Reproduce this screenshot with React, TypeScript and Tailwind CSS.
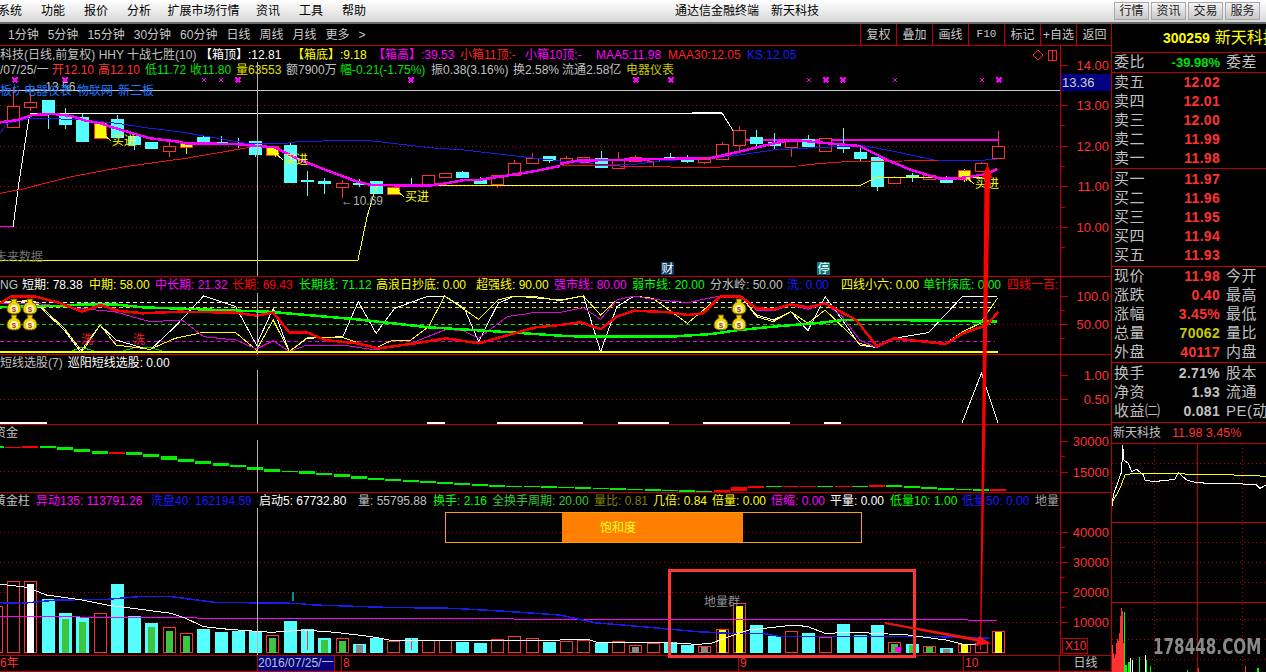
import React from 'react';

type Pt = [number, number];
type Item = { t: string; c: string };

const CANDLE_X = (i: number) => Math.round(13.2 + 17.28 * i);
const pts = (a: Pt[]) => a.map(([x, y]) => `${x},${y}`).join(' ');
// helpers for reading off crops of the picture
const L = (top: number, a: Pt[]): Pt[] => a.map(([x, y]) => [x / 2.8, top + y / 3]);
const R = (top: number, a: Pt[]): Pt[] => a.map(([x, y]) => [560 + x / 2.904, top + y / 3]);

const menu = ['功能', '报价', '分析', '扩展市场行情', '资讯', '工具', '帮助'];
const periods = ['1分钟', '5分钟', '15分钟', '30分钟', '60分钟', '日线', '周线', '月线', '更多'];
const tools = ['复权', '叠加', '画线', 'F10', '标记', '+自选', '返回'];

const info1: Item[] = [
    { t: '科技(日线,前复权) HHY 十战七胜(10)', c: 'w-[200px] text-[#c0c0c0]' },
    { t: '【箱顶】:12.81', c: 'w-[92px] text-white' },
    { t: '【箱底】:9.18', c: 'w-[81px] text-[#ffff00]' },
    { t: '【箱高】:39.53', c: 'w-[87px] text-[#ff00ff]' },
    { t: '小箱11顶:-', c: 'w-[65px] text-[#ff2020]' },
    { t: '小箱10顶:-', c: 'w-[71px] text-[#ff00ff]' },
    { t: 'MAA5:11.98', c: 'w-[72px] text-[#ff00ff]' },
    { t: 'MAA30:12.05', c: 'w-[79px] text-[#ff2020]' },
    { t: 'KS:12.05', c: 'w-[60px] text-[#1a1aff]' },
];
const info2: Item[] = [
    { t: '/07/25/一', c: 'w-[52px] text-[#c0c0c0]' },
    { t: '开12.10', c: 'w-[46px] text-[#ff3232]' },
    { t: '高12.10', c: 'w-[47px] text-[#ff3232]' },
    { t: '低11.72', c: 'w-[45px] text-[#00e000]' },
    { t: '收11.80', c: 'w-[46px] text-[#00e000]' },
    { t: '量63553', c: 'w-[50px] text-[#e0e000]' },
    { t: '额7900万', c: 'w-[54px] text-[#c0c0c0]' },
    { t: '幅-0.21(-1.75%)', c: 'w-[91px] text-[#00e000]' },
    { t: '振0.38(3.16%)', c: 'w-[82px] text-[#c0c0c0]' },
    { t: '换2.58%', c: 'w-[49px] text-[#c0c0c0]' },
    { t: '流通2.58亿', c: 'w-[64px] text-[#c0c0c0]' },
    { t: '电器仪表', c: 'w-[60px] text-[#c8c800]' },
];
const row2: Item[] = [
    { t: 'NG', c: 'w-[22px] text-[#c0c0c0]' },
    { t: '短期: 78.38', c: 'w-[67px] text-white' },
    { t: '中期: 58.00', c: 'w-[66px] text-[#ffff00]' },
    { t: '中长期: 21.32', c: 'w-[77px] text-[#ff00ff]' },
    { t: '长期: 69.43', c: 'w-[67px] text-[#ff0000]' },
    { t: '长期线: 71.12', c: 'w-[77px] text-[#00ff00]' },
    { t: '高浪日抄底: 0.00', c: 'w-[100px] text-[#ffff00]' },
    { t: '超强线: 90.00', c: 'w-[78px] text-[#ffff00]' },
    { t: '强市线: 80.00', c: 'w-[78px] text-[#ff00ff]' },
    { t: '弱市线: 20.00', c: 'w-[78px] text-[#00ff00]' },
    { t: '分水岭: 50.00', c: 'w-[77px] text-[#c0c0c0]' },
    { t: '洗: 0.00', c: 'w-[54px] text-[#1a1aff]' },
    { t: '四线小六: 0.00', c: 'w-[82px] text-[#ffff00]' },
    { t: '单针探底: 0.00', c: 'w-[84px] text-[#00ff00]' },
    { t: '四线一百:', c: 'w-[53px] text-[#ff0000]' },
];
const row5: Item[] = [
    { t: '黄金柱', c: '-ml-[6px] w-[42px] text-[#c0c0c0]' },
    { t: '异动135: 113791.26', c: 'w-[115px] text-[#ff00ff]' },
    { t: '洗盘40: 162194.59', c: 'w-[108px] text-[#1a1aff]' },
    { t: '启动5: 67732.80', c: 'w-[99px] text-white' },
    { t: '量: 55795.88', c: 'w-[75px] text-[#c0c0c0]' },
    { t: '换手: 2.16', c: 'w-[59px] text-[#00ff00]' },
    { t: '全换手周期: 20.00', c: 'w-[102px] text-[#33cc33]' },
    { t: '量比: 0.81', c: 'w-[59px] text-[#808000]' },
    { t: '几倍: 0.84', c: 'w-[59px] text-[#ffff00]' },
    { t: '倍量: 0.00', c: 'w-[59px] text-[#ffff00]' },
    { t: '倍缩: 0.00', c: 'w-[59px] text-[#ff00ff]' },
    { t: '平量: 0.00', c: 'w-[60px] text-white' },
    { t: '低量10: 1.00', c: 'w-[72px] text-[#00ff00]' },
    { t: '低量50: 0.00', c: 'w-[73px] text-[#1a1aff]' },
    { t: '地量', c: 'w-[25px] text-[#a0a0a0]' },
];

// kind, body top, body bottom, wick high, wick low
const candles: [string, number, number, number, number][] = [
    ['r', 106, 127, 88, 127], ['r', 102, 107, 87, 111], ['c', 100, 113, 100, 129], ['c', 115, 124, 108, 129],
    ['c', 117, 141, 114, 141], ['y', 122, 138, 122, 138], ['c', 119, 137, 115, 137], ['c', 136, 144, 136, 150],
    ['c', 142, 148, 142, 149], ['r', 146, 151, 142, 157], ['y', 142, 147, 142, 154], ['c', 137, 142, 135, 142],
    ['c', 142, 143, 136, 143], ['c', 143, 144, 138, 148], ['c', 141, 154, 141, 157], ['y', 146, 155, 146, 155],
    ['c', 145, 182, 142, 182], ['c', 180, 181, 171, 196], ['c', 181, 183, 178, 194], ['r', 183, 187, 180, 198],
    ['c', 183, 184, 179, 187], ['c', 181, 193, 181, 193], ['y', 187, 194, 187, 194], ['c', 184, 185, 178, 185],
    ['r', 175, 184, 175, 184], ['r', 173, 177, 173, 177], ['c', 172, 177, 171, 178], ['c', 179, 183, 177, 183],
    ['r', 175, 184, 175, 188], ['r', 163, 175, 160, 175], ['r', 158, 163, 153, 163], ['c', 156, 160, 156, 163],
    ['r', 158, 162, 156, 162], ['r', 157, 162, 157, 162], ['c', 158, 167, 151, 167], ['r', 159, 168, 152, 168],
    ['r', 157, 161, 155, 161], ['r', 158, 161, 158, 166], ['c', 157, 159, 153, 159], ['c', 159, 161, 155, 163],
    ['r', 159, 162, 159, 164], ['r', 144, 159, 142, 160], ['r', 130, 145, 126, 150], ['c', 137, 143, 130, 147],
    ['c', 142, 145, 133, 149], ['r', 139, 147, 139, 157], ['c', 139, 146, 135, 146], ['r', 138, 151, 138, 151],
    ['c', 144, 148, 128, 153], ['c', 152, 158, 148, 161], ['c', 157, 186, 157, 191], ['r', 177, 183, 176, 184],
    ['c', 175, 177, 173, 182], ['r', 175, 179, 174, 179], ['c', 177, 182, 176, 182], ['y', 170, 179, 169, 182],
    ['r', 163, 171, 162, 171], ['r', 146, 158, 131, 158],
];

// body top, kind, inner top, inner colour (crop units of the volume panel)
const volumes: [number, string, number?, string?][] = [
    [348, 'r'], [274, 'r'], [274, 'r', 282, '#ffffff'], [327, 'c'], [369, 'c', 387, '#3fc43f'], [381, 'c', 396, '#3fc43f'],
    [370, 'r'], [282, 'c'], [378, 'c'], [399, 'c', 411, '#3fc43f'], [412, 'r', 423, '#3fc43f'], [430, 'r', 438, '#3fc43f'],
    [417, 'c'], [426, 'c'], [423, 'c'], [424, 'c'], [436, 'r', 444, '#3fc43f'], [393, 'c'], [417, 'c', 420, '#ff3232|'],
    [444, 'c', 450, '#3fc43f'], [445, 'r', 453, '#3fc43f'], [462, 'c', 465, '#888888'], [444, 'c'], [454, 'r'],
    [444, 'c', 447, '#ff3232|'], [451, 'r'], [451, 'r'], [456, 'c'], [459, 'c'], [448, 'r'], [439, 'r'], [445, 'r'], [456, 'c'],
    [454, 'r'], [451, 'r'], [459, 'c'], [454, 'r'], [466, 'r', 470, '#888888'], [460, 'r'], [456, 'c'], [465, 'c'],
    [469, 'r', 472, '#888888'], [418, 'r', 420, '#ffff00'], [340, 'r', 348, '#ffff00'], [405, 'c'], [438, 'c'], [424, 'r'],
    [429, 'c'], [442, 'r'], [402, 'c'], [435, 'c'], [405, 'c'], [457, 'r', 462, '#3fc43f'], [462, 'c', 466, '#3fc43f'],
    [469, 'r', 472, '#3fc43f'], [474, 'c', 477, '#888888'], [462, 'r', 463, '#ffff00'], [461, 'r'], [424, 'r', 427, '#ffff00'],
];

// capital flow blocks, first entry sits left of candle 0
const flows: [number, number, string][] = [
    [228, 233, 'g'], [230, 233, 'r'], [229, 233, 'r'], [228, 233, 'g'], [231, 240, 'g'], [237, 245, 'g'], [243, 251, 'g'], [246, 251, 'r'],
    [246, 255, 'g'], [252, 261, 'g'], [258, 270, 'g'], [267, 276, 'g'], [273, 281, 'g'], [279, 288, 'g'], [285, 292, 'g'], [291, 300, 'g'],
    [297, 305, 'g'], [303, 305, 'g'], [303, 311, 'g'], [309, 315, 'g'], [312, 321, 'g'], [318, 327, 'g'], [324, 330, 'g'], [327, 333, 'g'],
    [330, 335, 'g'], [333, 339, 'g'], [336, 342, 'g'], [339, 345, 'g'], [342, 347, 'g'], [345, 351, 'g'], [348, 351, 'g'], [348, 351, 'g'],
    [348, 354, 'g'], [351, 354, 'g'], [351, 357, 'g'], [354, 357, 'g'], [354, 360, 'g'], [357, 360, 'g'], [357, 363, 'g'], [360, 363, 'g'],
    [360, 366, 'g'], [363, 366, 'g'], [360, 366, 'r'], [351, 363, 'r'], [348, 354, 'r'], [348, 351, 'g'], [348, 351, 'r'], [348, 351, 'r'],
    [348, 351, 'g'], [348, 351, 'r'], [348, 351, 'g'], [345, 351, 'r'], [345, 351, 'g'], [348, 354, 'g'], [351, 357, 'g'], [354, 360, 'g'],
    [357, 360, 'g'], [357, 363, 'g'], [357, 363, 'r'],
];

const bigMarks = [15, 65, 238, 411, 636, 671, 826, 843, 999];
const smallMarks = [204, 221, 809, 895, 982];
const onlySegments: [number, number][] = [[0, 47], [427, 445], [497, 583], [618, 669], [703, 790], [824, 841]];

const Line: React.FC<{ p: Pt[]; c: string; w?: number; dash?: string }> = ({ p, c, w = 1, dash }) => (
    <polyline points={pts(p)} fill="none" stroke={c} strokeWidth={w} strokeDasharray={dash} />
);

const Dotted: React.FC<{ y: number; x1?: number; x2?: number }> = ({ y, x1 = 0, x2 = 1060 }) => (
    <line x1={x1} x2={x2} y1={y} y2={y} stroke="#c00000" strokeDasharray="1 3" />
);

const Legend: React.FC<{ items: Item[]; className: string }> = ({ items, className }) => (
    <div className={`relative flex overflow-hidden text-[12px] whitespace-nowrap ${className}`}>
        {items.map((it, i) => (
            <span key={i} className={`shrink-0 ${it.c}`}>{it.t}</span>
        ))}
    </div>
);

const Axis: React.FC<{ top: number; h: number; labels: [number, string][]; minor?: number[] }> = ({ top, h, labels, minor = [] }) => (
    <svg viewBox={`1061 ${top} 50 ${h}`} className="h-full w-[50px]" shapeRendering="crispEdges">
        {labels.map(([y, t]) => (
            <g key={t}>
                <line x1={1061} x2={1068} y1={y} y2={y} stroke="#c00000" />
                <text x={1109} y={y + 5} textAnchor="end" fontSize={13} fill="#ff3232">{t}</text>
            </g>
        ))}
        {minor.map(y => <line key={y} x1={1061} x2={1065} y1={y} y2={y} stroke="#c00000" />)}
    </svg>
);

const Bag: React.FC<{ x: number; y: number }> = ({ x, y }) => (
    <g shapeRendering="geometricPrecision">
        <path d={`M${x - 3} ${y - 8} h6 l-1 3 c3 1 5 4 5 7 c0 3 -2 5 -7 5 s-7 -2 -7 -5 c0 -3 2 -6 5 -7 z`} fill="#f2d400" stroke="#6b5600" />
        <circle cx={x} cy={y + 2} r={4} fill="#fff8cc" />
        <text x={x} y={y + 5} textAnchor="middle" fontSize={8} fontWeight={700} fill="#a04a00">$</text>
    </g>
);

const Buy: React.FC<{ x: number; y: number }> = ({ x, y }) => (
    <g>
        <line x1={x - 9} y1={y - 2} x2={x - 1} y2={y + 5} stroke="#ffff00" />
        <line x1={x - 9} y1={y - 2} x2={x - 9} y2={y + 2} stroke="#ffff00" />
        <line x1={x - 9} y1={y - 2} x2={x - 5} y2={y - 2} stroke="#ffff00" />
        <text x={x} y={y + 9} fontSize={12} fill="#ffff00">买进</text>
    </g>
);

const MainChart = () => (
    <svg viewBox="0 46 1060 230" className="absolute inset-0 h-full w-full" shapeRendering="crispEdges">
        {[105, 146, 186, 227].map(y => <Dotted key={y} y={y} />)}
        <line x1={0} x2={1060} y1={90} y2={90} stroke="#c8c8c8" />
        {bigMarks.map(x => (
            <path key={x} d={`M${x - 2.5} 77.5 l5 5 M${x + 2.5} 77.5 l-5 5`} stroke="#ff00ff" strokeWidth={1.5} />
        ))}
        {smallMarks.map(x => (
            <path key={x} d={`M${x - 2} 78 l4 4 M${x + 2} 78 l-4 4`} stroke="#ff00ff" />
        ))}
        <Line c="#ffffff" p={[...L(90, [[0, 410], [37, 410], [50, 300], [80, 90], [85, 70]]), [722, 113], [739, 140]]} />
        <Line c="#ff00ff" p={L(90, [[0, 410], [37, 410]])} />
        <Line c="#ff00ff" w={1.5} p={[[739, 140], [998, 140]]} />
        {candles.map(([k, t, b, hi, lo], i) => {
            const x = CANDLE_X(i);
            const col = k === 'c' ? '#55ffff' : '#ff3232';
            return (
                <g key={i}>
                    <line x1={x} x2={x} y1={hi} y2={lo} stroke={k === 'y' ? '#ffff00' : col} />
                    <rect
                        x={x - 6} y={t} width={12} height={b - t}
                        fill={k === 'c' ? '#55ffff' : k === 'y' ? '#ffff00' : '#000000'}
                        stroke={k === 'c' ? '#55ffff' : '#ff3232'}
                    />
                </g>
            );
        })}
        <Line c="#1a1aee" p={L(90, [[0, 130], [20, 100], [85, 85], [130, 85], [230, 90], [330, 100], [400, 112], [500, 125], [600, 143], [700, 162], [800, 160], [840, 154], [1030, 151], [1100, 160], [1200, 173], [1300, 180], [1500, 205], [1568, 212]])} />
        <Line c="#1a1aee" p={R(90, [[0, 215], [100, 222], [200, 225], [300, 212], [440, 205], [520, 195], [620, 180], [700, 175], [760, 172], [880, 167], [960, 182], [1100, 213], [1200, 212], [1270, 208]])} />
        <Line c="#f01010" p={L(90, [[0, 310], [60, 298], [200, 260], [350, 230], [520, 205], [700, 172]])} />
        <Line c="#f01010" p={R(90, [[0, 225], [100, 226], [245, 230], [395, 232], [545, 230], [690, 228], [740, 222], [800, 217], [850, 214], [1000, 213], [1100, 210]])} />
        <Line c="#ffff00" p={[[0, 260], [358, 260], [367, 217], [375, 190], [378, 185], [861, 185], [877, 177], [987, 177]]} />
        <Line c="#ff00ff" w={2.5} p={L(90, [[0, 97], [50, 90], [90, 75], [150, 72], [200, 78], [240, 92], [280, 100], [340, 120], [420, 145], [500, 155], [520, 160], [660, 162], [720, 168], [770, 172], [830, 205], [900, 235], [1000, 275], [1040, 285], [1200, 287], [1250, 280], [1300, 270], [1340, 270], [1400, 260], [1500, 243], [1568, 228]])} />
        <Line c="#ff00ff" w={2.5} p={R(90, [[0, 222], [50, 212], [250, 208], [440, 204], [520, 185], [600, 165], [660, 152], [700, 152], [780, 160], [870, 168], [950, 210], [1020, 240], [1100, 265], [1150, 265], [1180, 262], [1240, 252], [1270, 237]])} />
        <Buy x={112} y={136} />
        <Buy x={284} y={155} />
        <Buy x={405} y={192} />
        <Buy x={975} y={179} />
        <text x={30} y={91} fontSize={12} fill="#c0c0c0">← 13.56</text>
        <text x={341} y={205} fontSize={12} fill="#b0b0b0">←10.69</text>
        <text x={-5} y={261} fontSize={12} fill="#707070">未来数据</text>
        <rect x={661} y={262} width={13} height={13} fill="#0a3a66" />
        <text x={667.5} y={273} textAnchor="middle" fontSize={12} fill="#ffffff">财</text>
        <rect x={817} y={262} width={13} height={13} fill="#0a7a7a" />
        <text x={823.5} y={273} textAnchor="middle" fontSize={12} fill="#ffffff">停</text>
        <path d="M1038 50 l5 5 l-5 5 l-5 -5 z" fill="none" stroke="#ff2020" />
        <rect x={1048} y={50} width={8} height={10} fill="none" stroke="#ff2020" />
        <line x1={1052} x2={1052} y1={50} y2={60} stroke="#ff2020" />
    </svg>
);

const SignalChart = () => (
    <svg viewBox="0 277 1060 77" className="absolute inset-0 h-full w-full" shapeRendering="crispEdges">
        <line x1={0} x2={995} y1={302} y2={302} stroke="#ffffff" strokeDasharray="4 3" />
        <line x1={0} x2={995} y1={307} y2={307} stroke="#e8e800" strokeDasharray="4 3" />
        <line x1={0} x2={995} y1={324} y2={324} stroke="#00e000" strokeDasharray="4 3" />
        <line x1={0} x2={995} y1={341} y2={341} stroke="#e000e0" strokeDasharray="4 3" />
        <Dotted y={324} x1={995} />
        <Line c="#00d000" p={L(270, [[190, 247], [230, 232], [275, 247]])} />
        <Line c="#00d000" p={L(270, [[330, 247], [380, 232], [420, 232], [465, 247]])} />
        <Line c="#ffffff" p={[...L(270, [[0, 100], [90, 90], [180, 180], [225, 245], [280, 165], [325, 210], [420, 240], [490, 170], [570, 78], [660, 110], [718, 225], [765, 115], [810, 245], [860, 205], [960, 200], [1003, 95], [1053, 190], [1105, 115], [1200, 78], [1245, 78], [1300, 115], [1340, 215], [1395, 100], [1440, 78], [1568, 90]]), ...R(270, [[68, 78], [118, 245], [165, 110], [215, 78], [270, 85], [370, 160], [465, 78], [525, 78], [570, 135], [620, 150], [670, 125], [720, 182], [770, 80], [820, 150], [870, 225], [920, 233], [970, 205], [1070, 188], [1170, 78], [1270, 78]])]} />
        <Line c="#ffff00" p={[...L(270, [[0, 95], [100, 95], [180, 175], [230, 245], [280, 165], [325, 225], [420, 238], [490, 205], [570, 187], [660, 188], [718, 240], [765, 150], [810, 245], [860, 203], [960, 203], [1050, 235], [1100, 210], [1150, 210], [1200, 170], [1245, 78], [1340, 148], [1395, 90], [1440, 78], [1490, 78], [1568, 92]]), ...R(270, [[68, 78], [118, 135], [165, 90], [215, 78], [270, 85], [370, 160], [465, 78], [525, 78], [570, 140], [620, 155], [670, 125], [720, 160], [770, 120], [820, 170], [870, 220], [920, 233], [970, 205], [1070, 215], [1120, 220], [1170, 185], [1220, 160], [1270, 85]])]} />
        <Line c="#e000e0" p={[...L(270, [[0, 100], [100, 100], [220, 115], [320, 125], [420, 155], [510, 150], [570, 200], [660, 210], [718, 237], [765, 212], [810, 245], [860, 225], [960, 225], [1050, 240], [1150, 220], [1250, 178], [1300, 183], [1340, 205], [1420, 140], [1500, 127], [1568, 127]]), ...R(270, [[68, 113], [118, 148], [165, 90], [215, 78], [270, 88], [370, 98], [465, 78], [525, 78], [570, 120], [620, 122], [670, 105], [720, 118], [770, 100], [820, 140], [870, 210], [920, 233], [970, 205], [1070, 213], [1120, 220]])]} />
        <Line c="#00ff00" w={2.5} p={[...L(270, [[0, 112], [100, 108], [170, 108], [230, 103], [320, 103], [400, 112], [560, 118], [750, 125], [1000, 148], [1200, 172], [1400, 185], [1568, 197]]), ...R(270, [[70, 200], [320, 200], [440, 192], [520, 180], [620, 170], [770, 157], [820, 150], [970, 150], [1270, 155]])]} />
        <Line c="#ff0000" w={2.5} p={[...L(270, [[0, 100], [30, 80], [100, 80], [170, 100], [230, 125], [280, 105], [330, 122], [400, 130], [500, 125], [660, 128], [718, 137], [765, 128], [810, 187], [860, 187], [910, 210], [1000, 220], [1060, 235], [1150, 222], [1250, 205], [1340, 220], [1440, 190], [1500, 172], [1568, 165]]), ...R(270, [[60, 157], [118, 177], [165, 140], [215, 122], [320, 127], [370, 135], [415, 130], [465, 80], [525, 80], [570, 115], [620, 118], [670, 103], [720, 112], [770, 100], [860, 150], [920, 228], [970, 205], [1120, 222], [1170, 190], [1240, 165], [1273, 125]])]} />
        <line x1={0} x2={998} y1={352} y2={352} stroke="#ffff00" strokeWidth={2} />
        <text x={81} y={344} fontSize={12} fill="#ff2020">洗</text>
        <text x={133} y={344} fontSize={12} fill="#ff2020">洗</text>
        <Bag x={14} y={307} />
        <Bag x={30} y={307} />
        <Bag x={14} y={323} />
        <Bag x={30} y={323} />
        <Bag x={739} y={307} />
        <Bag x={721} y={323} />
        <Bag x={739} y={323} />
    </svg>
);

const PickChart = () => (
    <svg viewBox="0 355 1060 69" className="absolute inset-0 h-full w-full" shapeRendering="crispEdges">
        <Dotted y={399} />
        {onlySegments.map(([a, b]) => (
            <rect key={a} x={a} y={422} width={b - a} height={2} fill="#ffffff" />
        ))}
        <Line c="#ffffff" p={[[962, 423], [981.5, 373], [998, 423]]} />
    </svg>
);

const FlowChart = () => (
    <svg viewBox="0 425 1060 67" className="absolute inset-0 h-full w-full" shapeRendering="crispEdges">
        <Dotted y={471} />
        {flows.map(([t, b, k], i) => (
            <rect
                key={i}
                x={CANDLE_X(i - 1) - 8}
                y={370 + t / 3}
                width={16}
                height={(b - t) / 3}
                fill={k === 'g' ? '#00ee00' : '#ff0000'}
            />
        ))}
    </svg>
);

const VolumeChart = () => {
    const toY = (z: number) => 490 + z / 3;
    return (
        <svg viewBox="0 493 1060 162" className="absolute inset-0 h-full w-full" shapeRendering="crispEdges">
            {[532, 562, 592, 622].map(y => <Dotted key={y} y={y} />)}
            {volumes.map(([t, k, it, ic], n) => {
                const x = CANDLE_X(n - 1);
                const y = toY(t);
                const isLine = ic?.endsWith('|');
                return (
                    <g key={n}>
                        <rect
                            x={x - 6} y={y} width={12} height={652.5 - y}
                            fill={k === 'c' ? '#55ffff' : '#000000'}
                            stroke={k === 'c' ? '#55ffff' : '#ff3232'}
                        />
                        {it !== undefined && ic && !isLine && (
                            <rect x={x - 3} y={toY(it)} width={6.5} height={652.5 - toY(it)} fill={ic} />
                        )}
                        {it !== undefined && isLine && (
                            <line x1={x} x2={x} y1={toY(it)} y2={650} stroke="#ff3232" />
                        )}
                    </g>
                );
            })}
            <rect x={895} y={647} width={6} height={5} fill="#ff00ff" />
            <Line c="#ff00ff" p={[...L(490, [[0, 380], [80, 380], [500, 383], [600, 385], [1170, 385], [1568, 388]]), ...R(490, [[1100, 388], [1270, 392]])]} />
            <Line c="#1a1aee" w={1.5} p={[...L(490, [[0, 338], [60, 340], [160, 330], [300, 328], [400, 319], [480, 320], [600, 337], [830, 340], [880, 345], [1080, 352], [1270, 355], [1430, 365], [1568, 375]]), ...R(490, [[100, 398], [260, 412], [400, 425], [490, 430], [590, 430], [640, 440], [1100, 440], [1250, 445]])]} />
            <Line c="#ffffff" p={[...L(490, [[0, 283], [20, 285], [75, 292], [130, 315], [230, 330], [300, 345], [350, 352], [480, 370], [520, 385], [570, 410], [640, 418], [760, 427], [850, 420], [940, 427], [1040, 440], [1100, 452], [1568, 450]]), ...R(490, [[80, 448], [110, 458], [300, 458], [400, 463], [440, 460], [490, 440], [550, 420], [620, 412], [680, 405], [720, 410], [770, 430], [860, 427], [1010, 435], [1120, 450], [1170, 463], [1220, 463]])]} />
            <rect x={292} y={592} width={2} height={9} fill="#0a8a8a" />
            <rect x={445} y={512.5} width={416} height={29.5} fill="none" stroke="#ffa000" />
            <rect x={562} y={513} width={181} height={29} fill="#ff7f00" />
            <text x={618} y={532} textAnchor="middle" fontSize={12} fill="#ffff20">饱和度</text>
            <text x={704} y={606} fontSize={12} fill="#909090">地量群</text>
        </svg>
    );
};

const Overlay = () => (
    <svg viewBox="0 24 1111 648" className="pointer-events-none absolute inset-0 h-full w-full" shapeRendering="crispEdges">
        {[[62, 276], [293, 354], [370, 424], [440, 492], [508, 655]].map(([a, b]) => (
            <line key={a} x1={257} x2={257} y1={a} y2={b} stroke="#b4b4b4" />
        ))}
        <rect x={669} y={570} width={245} height={86} fill="none" stroke="#ff3636" strokeWidth={3} />
        <g shapeRendering="geometricPrecision">
            <polygon points="980,650 981,650 990,178 992.5,178 987.5,164 982,178 984.5,178" fill="#ff0000" />
            <polygon points="885,622 885,624 977,641.5 975,646 991,643.5 979,636 978,638.5" fill="#f01414" />
        </g>
        <rect x={1062} y={638} width={25} height={15} fill="none" stroke="#c00000" />
        <text x={1065} y={650} fontSize={12} fill="#ff3232">X10</text>
    </svg>
);

const Quote: React.FC<{ a: string; v: string; c: string; b?: string }> = ({ a, v, c, b }) => (
    <div className="flex h-[19px] items-center whitespace-nowrap">
        <span className="w-[52px] shrink-0 pl-[2px] text-[15px] tracking-[0.5px] text-[#c0c0c0]">{a}</span>
        <span className={`w-[56px] shrink-0 text-right text-[14px] font-bold tracking-[0.3px] ${c}`}>{v}</span>
        {b && <span className="ml-[6px] text-[15px] tracking-[0.5px] text-[#c0c0c0]">{b}</span>}
    </div>
);

const MiniChart = () => (
    <svg viewBox="1112 444 154 228" className="h-[228px] w-[154px]" shapeRendering="crispEdges">
        {[463, 483, 542, 562, 582, 619, 639, 659].map(y => (
            <line key={y} x1={1112} x2={1266} y1={y} y2={y} stroke="#c00000" strokeDasharray="1 3" />
        ))}
        {[1154, 1242].map(x => (
            <line key={x} x1={x} x2={x} y1={444} y2={672} stroke="#c00000" strokeDasharray="1 3" />
        ))}
        <line x1={1197} x2={1197} y1={444} y2={672} stroke="#c00000" />
        <line x1={1112} x2={1266} y1={522} y2={522} stroke="#c00000" />
        <line x1={1112} x2={1266} y1={602} y2={602} stroke="#c00000" />
        <Line c="#ffffff" p={([[35, 265], [40, 225], [65, 155], [68, 75], [72, 120], [85, 130], [95, 155], [110, 148], [130, 165], [135, 180], [160, 185], [225, 178], [235, 158], [260, 180], [290, 188], [330, 190], [430, 192], [470, 195], [480, 205], [498, 195]] as Pt[]).map(([x, y]) => [1100 + x / 3, 420 + y / 3] as Pt)} />
        <Line c="#ffff00" p={([[35, 250], [60, 205], [75, 165], [100, 160], [330, 163], [470, 167], [498, 170]] as Pt[]).map(([x, y]) => [1100 + x / 3, 420 + y / 3] as Pt)} />
        <polygon points="1111,672 1111,628 1113,650 1115,660 1117,638 1119,642 1121,607 1123,612 1124,672" fill="#ff3232" />
        <rect x={1124} y={612} width={1} height={60} fill="#00ff00" />
        <rect x={1125} y={665} width={2} height={7} fill="#00ff00" />
        <rect x={1128} y={662} width={2} height={10} fill="#00ff00" />
        <rect x={1130} y={658} width={1} height={14} fill="#ffffff" />
        <rect x={1132} y={660} width={1} height={12} fill="#ffffff" />
        <rect x={1139} y={657} width={1} height={15} fill="#00ff00" />
        <rect x={1145} y={655} width={1} height={17} fill="#ffffff" />
        <rect x={1146} y={660} width={1} height={12} fill="#00ff00" />
        <rect x={1150} y={666} width={1} height={6} fill="#00ff00" />
        <rect x={1187} y={670} width={1} height={2} fill="#00ff00" />
        <rect x={1198} y={668} width={1} height={4} fill="#ff3232" />
        <rect x={1245} y={666} width={1} height={6} fill="#ff3232" />
        <rect x={1257} y={668} width={2} height={4} fill="#00ff00" />
    </svg>
);

export default function App() {
    return (
        <div className="h-[672px] w-[1266px] overflow-hidden bg-black font-['Liberation_Sans','Noto_Sans_CJK_SC',sans-serif]">
            {/* window bar */}
            <div className="flex h-[24px] items-center border-b-2 border-[#6a6a6a] bg-gradient-to-b from-[#ffffff] to-[#d8d8d8] text-[12px] text-black">
                <span className="-ml-[2px] w-[43px] shrink-0">系统</span>
                <div className="flex w-[634px] shrink-0 gap-[19px]">
                    {menu.map(m => <span key={m} className={m.length > 2 ? '-mx-[2.5px]' : ''}>{m}</span>)}
                </div>
                <span className="w-[96px] shrink-0">通达信金融终端</span>
                <span className="w-[343px] shrink-0">新天科技</span>
                <div className="flex gap-[2px]">
                    {['行情', '资讯', '交易', '服务'].map(m => (
                        <span key={m} className="flex h-[18px] w-[35px] items-center justify-center border border-[#a8a8a8] bg-gradient-to-b from-[#f4f4f4] to-[#c8c8c8] text-[#222]">{m}</span>
                    ))}
                </div>
            </div>

            <div className="flex h-[648px]">
                <div className="relative w-[1111px] shrink-0">
                    {/* period toolbar */}
                    <div className="flex h-[22px] items-center border-b border-[#c00000] text-[12px] text-[#c8c8c8]">
                        <div className="flex w-[860px] shrink-0 gap-[9px] pl-[8px]">
                            {periods.map(p => <span key={p} className="shrink-0">{p}</span>)}
                            <span className="shrink-0 text-[#c8c8c8]">&gt;</span>
                        </div>
                        {tools.map(t => (
                            <span key={t} className={`flex h-full w-[36px] shrink-0 items-center justify-center border-l border-[#c00000] ${t === 'F10' ? "font-['Liberation_Mono'] text-[11px]" : ''}`}>{t}</span>
                        ))}
                    </div>

                    <div className="flex h-[231px] border-b border-[#c00000]">
                        <div className="relative w-[1061px] shrink-0 border-r border-[#c00000]">
                            <MainChart />
                            <Legend items={info1} className="mt-[1px] h-[16px] leading-[16px]" />
                            <Legend items={info2} className="h-[15px] leading-[15px]" />
                            <div className="relative mt-[5px] flex gap-[5px] whitespace-nowrap text-[12px] leading-[16px] text-[#1e78ff]">
                                <span className="w-[19px] overflow-hidden">板块</span>
                                <span>电器仪表</span>
                                <span>物联网</span>
                                <span>新三板</span>
                            </div>
                        </div>
                        <div className="relative w-[50px]">
                            <Axis top={46} h={230} labels={[[65, '14.00'], [105, '13.00'], [146, '12.00'], [186, '11.00'], [227, '10.00']]} minor={[125, 166, 207, 247]} />
                            <div className="absolute left-0 top-[28px] h-[17px] w-[50px] bg-[#000080] pl-[1px] text-[13px] leading-[17px] text-[#d0d0d0]">13.36</div>
                        </div>
                    </div>

                    <div className="flex h-[78px] border-b border-[#c00000]">
                        <div className="relative w-[1061px] shrink-0 border-r border-[#c00000]">
                            <SignalChart />
                            <Legend items={row2} className="h-[16px] leading-[16px]" />
                        </div>
                        <div className="w-[50px]"><Axis top={277} h={77} labels={[[296, '100.0'], [324, '50.00']]} minor={[310, 338]} /></div>
                    </div>

                    <div className="flex h-[70px] border-b border-[#c00000]">
                        <div className="relative w-[1061px] shrink-0 border-r border-[#c00000]">
                            <PickChart />
                            <div className="relative flex h-[16px] gap-[5px] whitespace-nowrap text-[12px] leading-[16px]">
                                <span className="text-[#c0c0c0]">短线选股(7)</span>
                                <span className="text-white">巡阳短线选股: 0.00</span>
                            </div>
                        </div>
                        <div className="w-[50px]"><Axis top={355} h={69} labels={[[375, '1.00'], [399, '0.50']]} /></div>
                    </div>

                    <div className="flex h-[68px] border-b border-[#c00000]">
                        <div className="relative w-[1061px] shrink-0 border-r border-[#c00000]">
                            <FlowChart />
                            <div className="relative -ml-[6px] h-[16px] text-[12px] leading-[16px] text-[#c0c0c0]">资金</div>
                        </div>
                        <div className="w-[50px]"><Axis top={425} h={67} labels={[[441, '30000'], [472, '15000']]} minor={[456]} /></div>
                    </div>

                    <div className="flex h-[163px] border-b border-[#c00000]">
                        <div className="relative w-[1061px] shrink-0 overflow-hidden border-r border-[#c00000]">
                            <VolumeChart />
                            <Legend items={row5} className="h-[16px] leading-[16px]" />
                        </div>
                        <div className="w-[50px]"><Axis top={493} h={162} labels={[[532, '40000'], [562, '30000'], [592, '20000'], [622, '10000']]} minor={[547, 577, 607]} /></div>
                    </div>

                    {/* date strip */}
                    <div className="flex h-[16px] border-b border-[#c00000] text-[12px] leading-[15px] text-[#ff3232]">
                        <span className="w-[257px] shrink-0">6年</span>
                        <span className="w-[78px] shrink-0 whitespace-nowrap border-x border-[#c00000] bg-[#000080] text-[#c0c0c0]">2016/07/25/一</span>
                        <span className="w-[6px] shrink-0" />
                        <span className="w-[397px] shrink-0 border-l border-[#c00000] pl-[1px]">8</span>
                        <span className="w-[225px] shrink-0 border-l border-[#c00000] pl-[1px]">9</span>
                        <span className="w-[97px] shrink-0 border-l border-r border-[#c00000] pl-[1px]">10</span>
                        <span className="flex-1 text-center text-[#c0c0c0]">日线</span>
                    </div>

                    <Overlay />
                </div>

                {/* quote panel */}
                <div className="relative w-[155px] shrink-0 overflow-hidden border-l border-[#c00000]">
                    <div className="flex h-[29px] items-center whitespace-nowrap border-b border-[#c00000] pl-[51px] text-[14px] font-bold text-[#ffff00]">
                        <span>300259</span>
                        <span className="ml-[5px] text-[16px] font-normal">新天科技</span>
                    </div>
                    <div className="flex h-[20px] items-center border-b border-[#c00000] whitespace-nowrap">
                        <span className="w-[52px] shrink-0 pl-[2px] text-[15px] tracking-[0.5px] text-[#c0c0c0]">委比</span>
                        <span className="w-[56px] shrink-0 text-right text-[13px] font-bold text-[#00e000]">-39.98%</span>
                        <span className="ml-[6px] text-[15px] tracking-[0.5px] text-[#c0c0c0]">委差</span>
                    </div>
                    <div className="h-[96px] border-b border-[#c00000]">
                        <Quote a="卖五" v="12.02" c="text-[#ff3232]" />
                        <Quote a="卖四" v="12.01" c="text-[#ff3232]" />
                        <Quote a="卖三" v="12.00" c="text-[#ff3232]" />
                        <Quote a="卖二" v="11.99" c="text-[#ff3232]" />
                        <Quote a="卖一" v="11.98" c="text-[#ff3232]" />
                    </div>
                    <div className="h-[98px] border-b border-[#c00000] pt-[1px]">
                        <Quote a="买一" v="11.97" c="text-[#ff3232]" />
                        <Quote a="买二" v="11.96" c="text-[#ff3232]" />
                        <Quote a="买三" v="11.95" c="text-[#ff3232]" />
                        <Quote a="买四" v="11.94" c="text-[#ff3232]" />
                        <Quote a="买五" v="11.93" c="text-[#ff3232]" />
                    </div>
                    <div className="h-[96px] border-b border-[#c00000]">
                        <Quote a="现价" v="11.98" c="text-[#ff3232]" b="今开" />
                        <Quote a="涨跌" v="0.40" c="text-[#ff3232]" b="最高" />
                        <Quote a="涨幅" v="3.45%" c="text-[#ff3232]" b="最低" />
                        <Quote a="总量" v="70062" c="text-[#c8c800]" b="量比" />
                        <Quote a="外盘" v="40117" c="text-[#ff3232]" b="内盘" />
                    </div>
                    <div className="h-[60px] border-b border-[#c00000] pt-[1px]">
                        <Quote a="换手" v="2.71%" c="text-[#c0c0c0]" b="股本" />
                        <Quote a="净资" v="1.93" c="text-[#c0c0c0]" b="流通" />
                        <Quote a="收益㈡" v="0.081" c="text-[#c0c0c0]" b="PE(动)" />
                    </div>
                    <div className="flex h-[21px] items-center gap-[11px] whitespace-nowrap border-b border-[#c00000] pl-[1px] text-[12.5px]">
                        <span className="text-[12px] text-[#c0c0c0]">新天科技</span>
                        <span className="text-[#ff3232]">11.98 3.45%</span>
                    </div>
                    <MiniChart />
                    <div className="absolute left-[41px] top-[611px] origin-left scale-x-[0.69] whitespace-nowrap font-['DejaVu_Sans'] text-[22px] font-bold leading-[24px] text-[#8a8a8a] blur-[0.6px]">178448.COM</div>
                </div>
            </div>
        </div>
    );
}
